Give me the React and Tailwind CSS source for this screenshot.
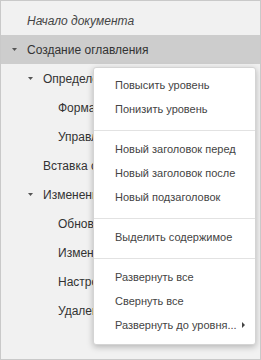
import { useState } from "react";

const rows = [
  { level: 0, text: "Начало документа", italic: true },
  { level: 0, text: "Создание оглавления", caret: true, selected: true },
  { level: 1, text: "Определение заголовков", caret: true },
  { level: 2, text: "Форматирование заголовков" },
  { level: 2, text: "Управление заголовками" },
  { level: 1, text: "Вставка оглавления" },
  { level: 1, text: "Изменение оглавления", caret: true },
  { level: 2, text: "Обновление оглавления" },
  { level: 2, text: "Изменение стиля" },
  { level: 2, text: "Настройки оглавления" },
  { level: 2, text: "Удаление оглавления" },
];

const menu = [
  ["Повысить уровень", "Понизить уровень"],
  ["Новый заголовок перед", "Новый заголовок после", "Новый подзаголовок"],
  ["Выделить содержимое"],
  ["Развернуть все", "Свернуть все", "Развернуть до уровня..."],
];

const pad = ["pl-[11px]", "pl-[27px]", "pl-[42px]"];

function Caret() {
  return (
    <svg width="5" height="3" viewBox="0 0 5 3" className="mr-[10px] shrink-0">
      <path d="M0 0h5L2.5 3z" fill="#555" />
    </svg>
  );
}

export default function App() {
  const [active, setActive] = useState(1);

  return (
    <div className="relative h-[360px] w-[261px] overflow-hidden border border-[#c9c9c9] bg-[#f1f1f1] font-['Liberation_Sans',Arial,sans-serif]">
      <div className="flex flex-col pt-[5px]">
        {rows.map((row, i) => (
          <div
            key={i}
            onClick={() => setActive(i)}
            className={`flex h-[29px] items-center whitespace-nowrap text-[12px] text-[#333] ${pad[row.level]} ${i === active ? "bg-[#cdcdcd]" : ""}`}
          >
            {row.caret ? <Caret /> : <span className="w-[15px] shrink-0" />}
            <span className={row.italic ? "italic text-[#444]" : ""}>{row.text}</span>
          </div>
        ))}
      </div>

      <div className="absolute left-[92px] top-[66px] w-[163px] rounded-[3px] border border-[#d4d4d4] bg-white pb-[7px] pt-[5px] shadow-[0_2px_6px_rgba(0,0,0,0.25)]">
        {menu.map((group, g) => (
          <div key={g} className={g > 0 ? "mt-[9px] border-t border-[#e2e2e2] pt-[6px]" : ""}>
            {group.map((item) => (
              <div key={item} className="flex h-[24px] items-center justify-between pl-[21px] pr-[10px] text-[11px] text-[#444]">
                <span>{item}</span>
                {item.endsWith("...") ? (
                  <svg width="3" height="6" viewBox="0 0 3 6">
                    <path d="M0 0l3 3-3 3z" fill="#444" />
                  </svg>
                ) : null}
              </div>
            ))}
          </div>
        ))}
      </div>
    </div>
  );
}
